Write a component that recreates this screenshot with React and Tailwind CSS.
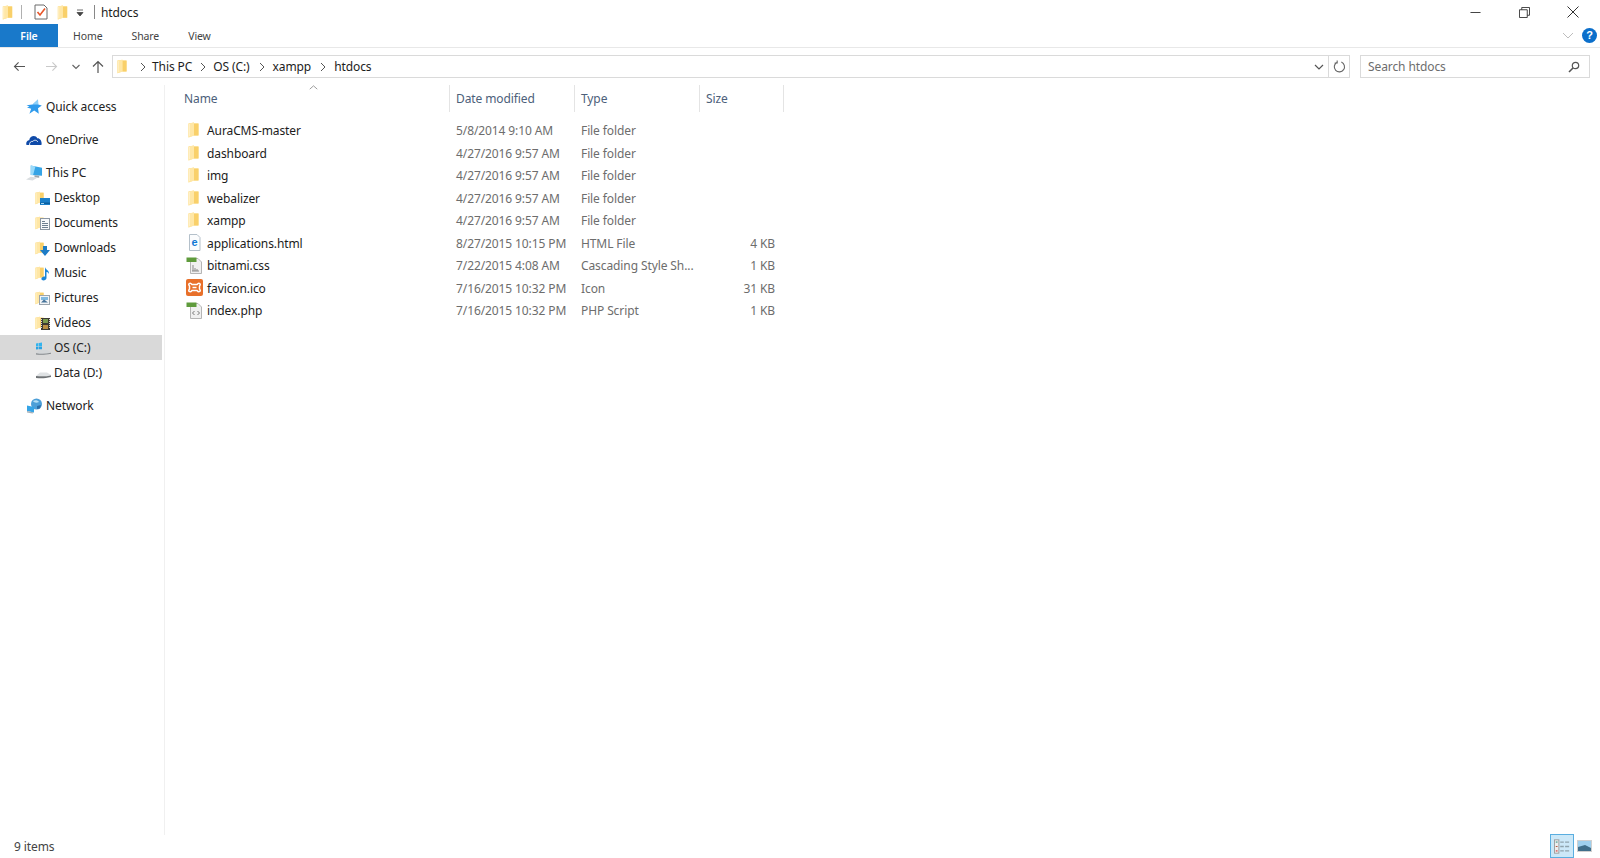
import React from "react";

const Folder = ({ className = "w-[11px] h-[16px]" }) => (
  <svg viewBox="0 0 11 16" className={className}>
    <path d="M0.5 1.5 L6 0.5 V1.5 H10.5 V13.5 L6 13.5 L0.5 15.5 Z" fill="#fddf8e" />
    <path d="M6 1.5 H10.5 V13.5 H6 Z" fill="#f9d06a" />
    <path d="M0.5 1.5 L6 0.5 V13.5 L0.5 15.5 Z" fill="#ffe7a6" />
    <path d="M1.5 2 V14" stroke="#fff3cf" strokeWidth="0.8" />
  </svg>
);

const Star = () => (
  <svg viewBox="0 0 16 16" className="w-4 h-4">
    <path d="M12 0.5 L12.2 5.4 L15.8 6.4 L12 9.2 L12.8 14.8 L8.2 11.6 L3.4 14.8 L5.2 9.8 L1 8.6 L3.4 7.4 L0.5 6.2 L6.6 5.6 Z" fill="#2f9bec" />
    <path d="M12 0.5 L12.2 5.4 L6.6 5.6 Z" fill="#8fd0f8" />
  </svg>
);

const Cloud = () => (
  <svg viewBox="0 0 16 16" className="w-4 h-4">
    <path d="M0.5 13 C-0.5 10 1.5 8 3.2 8.2 C4 3.6 9.6 2.6 11.4 6.4 C13.8 6 16.4 9.6 15.4 13 Z" fill="#0f4aa8" />
    <path d="M3.6 13 C3.2 10.6 5 9 6.8 9.4 C8 7.6 11 8 11.8 10" fill="none" stroke="#ffffff" strokeWidth="0.9" />
  </svg>
);

const Computer = () => (
  <svg viewBox="0 0 18 17" className="w-[17px] h-[16px]">
    <path d="M5 0.5 L17 3 V11.5 L5 10.5 Z" fill="#35a4e6" />
    <path d="M5 0.5 L10 1.5 L7.5 10.7 L5 10.5 Z" fill="#9adafa" />
    <path d="M9 11 L14 11.5 V13.5 L9 13 Z" fill="#9aa5ad" />
    <path d="M0 15.5 L5 12.5 L12 13.5 L7 16.5 Z" fill="#d9dde0" />
  </svg>
);

const Desktop = () => (
  <div className="relative w-[15px] h-4">
    <Folder className="w-[9px] h-4" />
    <svg viewBox="0 0 10 8" className="absolute right-0 bottom-[1px] w-[10px] h-2">
      <rect width="10" height="7" y="1" fill="#1b7fc9" />
      <rect width="10" height="1.5" y="5.5" fill="#0c5f9e" />
      <rect width="3" height="1" x="1" y="6" fill="#9fd5f4" />
    </svg>
  </div>
);

const Documents = () => (
  <div className="relative w-[15px] h-4">
    <Folder className="w-[9px] h-4" />
    <svg viewBox="0 0 10 12" className="absolute right-0 bottom-[1px] w-[10px] h-3">
      <rect x="0.5" y="0.5" width="9" height="11" fill="#f7f9fb" stroke="#8b96a2" />
      <path d="M2 3.5 H5 M2 5.5 H8 M2 7.5 H8 M2 9.5 H8" stroke="#6e7f90" />
    </svg>
  </div>
);

const Downloads = () => (
  <div className="relative w-[15px] h-4">
    <Folder className="w-[9px] h-4" />
    <svg viewBox="0 0 10 10" className="absolute right-0 bottom-0 w-[10px] h-[10px]">
      <path d="M3 0 H7 V4 H10 L5 10 L0 4 H3 Z" fill="#1d7cc6" />
    </svg>
  </div>
);

const Music = () => (
  <div className="relative w-[15px] h-4">
    <Folder className="w-[9px] h-4" />
    <svg viewBox="0 0 10 14" className="absolute right-0 bottom-0 w-[10px] h-[14px]">
      <path d="M5 0 C5.5 3 9.5 3 9 7 C8 5 7 5 6.5 5 V11 C6.5 13 3.6 14 2 13 C0.5 12 2 9.4 5 9.6 Z" fill="#1b86d6" />
    </svg>
  </div>
);

const Pictures = () => (
  <div className="relative w-[15px] h-4">
    <Folder className="w-[9px] h-4" />
    <svg viewBox="0 0 11 10" className="absolute right-0 bottom-[1px] w-[11px] h-[10px]">
      <rect x="0.5" y="0.5" width="10" height="9" fill="#f2f4f6" stroke="#9aa4ac" />
      <rect x="2" y="2" width="7" height="3" fill="#7fb9e0" />
      <path d="M2 7.5 L5 4.5 L9 7.5 Z" fill="#47749a" />
    </svg>
  </div>
);

const Videos = () => (
  <div className="relative w-[15px] h-4">
    <Folder className="w-[9px] h-4" />
    <svg viewBox="0 0 9 12" className="absolute right-0 bottom-[1px] w-[9px] h-3">
      <rect width="9" height="12" fill="#3d3a33" />
      <rect x="2" y="1" width="5" height="4" fill="#7b9b4e" />
      <rect x="2" y="7" width="5" height="4" fill="#b98f44" />
      <path d="M0.5 1 V11 M8.5 1 V11" stroke="#ddd" strokeDasharray="1 1" />
    </svg>
  </div>
);

const DriveC = () => (
  <svg viewBox="0 0 17 16" className="w-[17px] h-4">
    <path d="M1 3.5 L3.5 3.1 V6 L1 6.4 Z M4 3 L7 2.6 V6 L4 6 Z" fill="#33b4ee" />
    <path d="M1 6.9 L3.5 6.5 V9.3 L1 9.6 Z M4 6.5 L7 6.5 V9.3 L4 9.3 Z" fill="#2aa3e3" />
    <path d="M1 13 L4 10 H12 L16 12.5 V13.5 C10 15 6 15 1 14.5 Z" fill="#d3d6d8" />
    <path d="M1 13.2 C6 14 11 14 16 12.8 V13.8 C10 15 6 15 1 14.6 Z" fill="#85898c" />
  </svg>
);

const DriveD = () => (
  <svg viewBox="0 0 17 16" className="w-[17px] h-4">
    <path d="M1 11 L5 7.5 H12 L16 10 V11 Z" fill="#dfe2e4" />
    <path d="M1 11 C6 11.5 11 11.5 16 10.5 V12 C10 13.5 6 13.5 1 13 Z" fill="#6f7376" />
  </svg>
);

const Network = () => (
  <svg viewBox="0 0 17 16" className="w-[17px] h-4">
    <circle cx="10.5" cy="6" r="5.5" fill="#4c9fd8" />
    <path d="M7 3 C9 1.5 12 2 13 4 C11 5 8 5 7 3 Z" fill="#b5e0f5" />
    <path d="M11 8 L15 7 L14 10.5 L11 11 Z" fill="#2a6da8" />
    <path d="M1 7.5 L8 9 V14.5 L1 13 Z" fill="#35a4e6" />
    <path d="M1 13 L8 14.5 L6.5 15.5 L1 14.5 Z" fill="#a7b0b7" />
  </svg>
);

const Notepad = () => (
  <svg viewBox="0 0 14 16" className="w-[14px] h-4">
    <path d="M1 1 H10 L13 4 V15 H1 Z" fill="#fff" stroke="#6b6b6b" />
    <path d="M3.5 8 L6 11 L11 4.5" fill="none" stroke="#e8562a" strokeWidth="1.6" />
  </svg>
);

const PageIcon = ({ children }) => (
  <svg viewBox="0 0 17 17" className="w-[17px] h-[17px]">{children}</svg>
);

const FileIcons = {
  folder: () => <Folder />,
  html: () => (
    <PageIcon>
      <path d="M3.5 0.5 H11 L14 3.5 V16.5 H3.5 Z" fill="#fbfcfd" stroke="#b4c0ca" />
      <text x="8.6" y="12" textAnchor="middle" fontSize="11" fontWeight="700" fill="#0f78d4" fontFamily="Liberation Sans, sans-serif">e</text>
    </PageIcon>
  ),
  css: () => (
    <PageIcon>
      <path d="M4.5 1.5 H12 L15.5 5 V16.5 H4.5 Z" fill="#f0f0f0" stroke="#b5b5b5" />
      <rect x="0.5" y="0.5" width="10" height="4.5" fill="#5f9b3c" />
      <path d="M7 8 V14 M9 11 V14 M11 12 V14 M6 14 H13" stroke="#8a8a8a" />
    </PageIcon>
  ),
  ico: () => (
    <PageIcon>
      <rect width="17" height="17" rx="2" fill="#e8702a" />
      <path d="M6 5.5 H11 C13 3 15.5 5 13.5 7 V10 C15.5 12 13 14 11 11.5 H6 C4 14 1.5 12 3.5 10 V7 C1.5 5 4 3 6 5.5 Z" fill="none" stroke="#fff" strokeWidth="1.5" />
      <path d="M6.5 8.5 H10.5" stroke="#fff" strokeWidth="1.5" />
    </PageIcon>
  ),
  php: () => (
    <PageIcon>
      <path d="M4.5 1.5 H12 L15.5 5 V16.5 H4.5 Z" fill="#f0f0f0" stroke="#b5b5b5" />
      <rect x="0.5" y="0.5" width="10" height="4.5" fill="#5f9b3c" />
      <path d="M8.5 9 L6.5 11 L8.5 13 M11.5 9 L13.5 11 L11.5 13" fill="none" stroke="#777" />
    </PageIcon>
  ),
};

const Chevron = () => (
  <svg viewBox="0 0 6 10" className="w-[6px] h-[10px]">
    <path d="M1 1 L5 5 L1 9" fill="none" stroke="#555" strokeWidth="1" />
  </svg>
);

const pcItems = [
  [Desktop, "Desktop"],
  [Documents, "Documents"],
  [Downloads, "Downloads"],
  [Music, "Music"],
  [Pictures, "Pictures"],
  [Videos, "Videos"],
  [DriveC, "OS (C:)", true],
  [DriveD, "Data (D:)"],
];

const files = [
  ["folder", "AuraCMS-master", "5/8/2014 9:10 AM", "File folder", ""],
  ["folder", "dashboard", "4/27/2016 9:57 AM", "File folder", ""],
  ["folder", "img", "4/27/2016 9:57 AM", "File folder", ""],
  ["folder", "webalizer", "4/27/2016 9:57 AM", "File folder", ""],
  ["folder", "xampp", "4/27/2016 9:57 AM", "File folder", ""],
  ["html", "applications.html", "8/27/2015 10:15 PM", "HTML File", "4 KB"],
  ["css", "bitnami.css", "7/22/2015 4:08 AM", "Cascading Style Sh...", "1 KB"],
  ["ico", "favicon.ico", "7/16/2015 10:32 PM", "Icon", "31 KB"],
  ["php", "index.php", "7/16/2015 10:32 PM", "PHP Script", "1 KB"],
];

const NavRow = ({ Icon, label, className = "" }) => (
  <div className={`flex items-center h-[25px] pl-[26px] text-[#222] ${className}`}>
    <span className="w-[20px] flex justify-start"><Icon /></span>
    <span>{label}</span>
  </div>
);

export default function App() {
  return (
    <div className="relative flex flex-col h-[858px] w-[1600px] overflow-hidden bg-white text-[12px] tracking-[-0.1px] font-['Noto_Sans',sans-serif] text-[#222]">
      {/* title bar */}
      <div className="flex items-center h-6 shrink-0">
        <span className="ml-[2px] flex"><Folder className="w-[11px] h-[15px]" /></span>
        <span className="ml-[8px] w-px h-[14px] bg-[#b0b0b0]" />
        <span className="ml-[12px] flex"><Notepad /></span>
        <span className="ml-[9px] flex"><Folder className="w-[11px] h-[15px]" /></span>
        <svg viewBox="0 0 8 8" className="ml-[8px] w-2 h-2 mt-[2px]">
          <path d="M1 1 H7 M1 3.5 H7 L4 7 Z" stroke="#444" fill="#444" strokeWidth="0.8" />
        </svg>
        <span className="ml-[10px] w-px h-[14px] bg-[#888]" />
        <span className="ml-[6px] pt-[2px] text-[#1c1c1c]">htdocs</span>
        <div className="ml-auto flex items-center">
          <svg viewBox="0 0 12 12" className="w-[11px] h-[11px] mr-[38px]"><path d="M0.5 6 H11.5" stroke="#333" /></svg>
          <svg viewBox="0 0 12 12" className="w-[11px] h-[11px] mr-[37px]"><path d="M0.5 3 H9 V11.5 H0.5 Z M3 3 V0.5 H11.5 V9 H9" fill="none" stroke="#333" /></svg>
          <svg viewBox="0 0 12 12" className="w-[12px] h-[12px] mr-[21px]"><path d="M0.5 0.5 L11.5 11.5 M11.5 0.5 L0.5 11.5" stroke="#333" /></svg>
        </div>
      </div>
      {/* ribbon tabs */}
      <div className="flex items-center h-[24px] shrink-0 border-b border-[#e8e8e8] text-[10.5px] text-[#444]">
        <div className="w-[58px] h-[23px] pt-[2px] bg-[#1979ca] text-white flex items-center justify-center font-semibold">File</div>
        <span className="ml-[15px] pt-[2px]">Home</span>
        <span className="ml-[29px] pt-[2px]">Share</span>
        <span className="ml-[29px] pt-[2px]">View</span>
        <svg viewBox="0 0 12 8" className="ml-auto mr-[8px] w-[12px] h-2">
          <path d="M1 1 L6 6 L11 1" fill="none" stroke="#bdbdbd" />
        </svg>
        <span className="mr-[3px] w-[15px] h-[15px] rounded-full bg-[#0b6fcb] text-white text-[11px] font-bold flex items-center justify-center font-['Liberation_Sans',sans-serif]">?</span>
      </div>
      {/* nav bar */}
      <div className="flex items-center h-[37px] shrink-0">
        <svg viewBox="0 0 14 12" className="ml-[13px] w-[13px] h-[11px]"><path d="M13 6 H1.5 M6 1.5 L1.5 6 L6 10.5" fill="none" stroke="#555" strokeWidth="1.2" /></svg>
        <svg viewBox="0 0 14 12" className="ml-[19px] w-[13px] h-[11px]"><path d="M1 6 H12.5 M8 1.5 L12.5 6 L8 10.5" fill="none" stroke="#c9c9c9" strokeWidth="1.2" /></svg>
        <svg viewBox="0 0 8 6" className="ml-[14px] w-2 h-[6px]"><path d="M0.5 1 L4 4.5 L7.5 1" fill="none" stroke="#666" strokeWidth="1.2" /></svg>
        <svg viewBox="0 0 12 13" className="ml-[12px] w-[12px] h-[13px]"><path d="M6 13 V1.5 M1 6.5 L6 1.5 L11 6.5" fill="none" stroke="#555" strokeWidth="1.2" /></svg>
        <div className="ml-[8px] w-[1238px] h-[23px] border border-[#dadada] flex items-center">
          <span className="ml-[4px] flex"><Folder className="w-[10px] h-[15px]" /></span>
          <span className="ml-[13px] flex"><Chevron /></span>
          <span className="ml-[6px] text-[#1c1c1c]">This PC</span>
          <span className="ml-[8px] flex"><Chevron /></span>
          <span className="ml-[7px] text-[#1c1c1c]">OS (C:)</span>
          <span className="ml-[9px] flex"><Chevron /></span>
          <span className="ml-[8px] text-[#1c1c1c]">xampp</span>
          <span className="ml-[9px] flex"><Chevron /></span>
          <span className="ml-[8px] text-[#1c1c1c]">htdocs</span>
          <div className="ml-auto flex items-center h-full">
            <svg viewBox="0 0 10 6" className="w-[10px] h-[6px] mr-[4px]"><path d="M1 1 L5 5 L9 1" fill="none" stroke="#555" strokeWidth="1.2" /></svg>
            <div className="h-full w-[21px] border-l border-[#dadada] flex items-center justify-center">
              <svg viewBox="0 0 14 14" className="w-[13px] h-[13px]"><path d="M9 2.2 A5.5 5.5 0 1 1 4 2.6 M4.5 0.5 V3.2 H1.8" fill="none" stroke="#666" strokeWidth="1.2" /></svg>
            </div>
          </div>
        </div>
        <div className="ml-[10px] w-[230px] h-[23px] border border-[#dadada] flex items-center text-[#6d6d6d]">
          <span className="ml-[7px]">Search htdocs</span>
          <svg viewBox="0 0 12 12" className="ml-auto mr-[9px] w-[12px] h-[12px]"><circle cx="7.5" cy="4.5" r="3.2" fill="none" stroke="#555" strokeWidth="1.2" /><path d="M5 7 L1 11" stroke="#555" strokeWidth="1.6" /></svg>
        </div>
      </div>
      {/* main */}
      <div className="flex flex-1 min-h-0">
        <div className="w-[165px] shrink-0 border-r border-[#f0f0f0] pt-[9px] mb-[23px]">
          <NavRow Icon={Star} label="Quick access" />
          <NavRow Icon={Cloud} label="OneDrive" className="mt-2" />
          <NavRow Icon={Computer} label="This PC" className="mt-2" />
          {pcItems.map(([Icon, label, sel]) => (
            <div key={label} className={`flex items-center h-[25px] pl-[35px] mr-[2px] ${sel ? "bg-[#d9d9d9]" : ""}`}>
              <span className="w-[19px] flex"><Icon /></span>
              <span>{label}</span>
            </div>
          ))}
          <NavRow Icon={Network} label="Network" className="mt-2" />
        </div>
        <div className="flex-1 relative">
          <svg viewBox="0 0 10 6" className="absolute left-[144px] top-0 w-[9px] h-[5px]"><path d="M0.5 5 L5 1 L9.5 5" fill="none" stroke="#8a8a8a" /></svg>
          <div className="flex h-[27px] text-[#4c607a] w-[619px]">
            <div className="w-[284px] pl-[19px] flex items-center">Name</div>
            <div className="w-[125px] pl-[6px] flex items-center border-l border-[#e4e4e4]">Date modified</div>
            <div className="w-[125px] pl-[6px] flex items-center border-l border-[#e4e4e4]">Type</div>
            <div className="w-[85px] pl-[6px] flex items-center border-x border-[#e4e4e4]">Size</div>
          </div>
          <div className="pt-[8px]">
            {files.map(([icon, name, date, type, size]) => {
              const Ico = FileIcons[icon];
              return (
                <div key={name} className="flex items-center h-[22.5px] text-[#6d6d6d] whitespace-nowrap">
                  <div className="w-[284px] flex items-center">
                    <span className={`flex justify-center -mt-[2px] ${icon === "folder" ? "ml-[23px] w-[11px]" : "ml-[21px] w-[17px]"}`}><Ico /></span>
                    <span className={icon === "folder" ? "text-[#1c1c1c] ml-[8px]" : "text-[#1c1c1c] ml-[4px]"}>{name}</span>
                  </div>
                  <div className="w-[125px] pl-[7px]">{date}</div>
                  <div className="w-[125px] pl-[7px]">{type}</div>
                  <div className="w-[76px] text-right">{size}</div>
                </div>
              );
            })}
          </div>
        </div>
      </div>
      {/* status bar */}
      <div className="absolute left-[14px] bottom-[2px] text-[#444]">9 items</div>
      <div className="absolute right-[8px] bottom-0 flex items-center gap-[3px]">
        <div className="w-[24px] h-[24px] bg-[#cce8f8] border border-[#5aaee0] flex items-center justify-center">
          <svg viewBox="0 0 18 16" className="w-[16px] h-[15px]">
            <rect x="0.5" y="0.5" width="5" height="15" fill="#eee" stroke="#999" />
            <path d="M2 3 H4" stroke="#0a7a6a" /><path d="M2 8 H4" stroke="#b0442a" /><path d="M2 13 H4" stroke="#c00" />
            <path d="M7 3 H11 M12.5 3 H17 M7 8 H11 M12.5 8 H17 M7 13 H11 M12.5 13 H17" stroke="#8fa3ad" strokeWidth="1.5" />
          </svg>
        </div>
        <svg viewBox="0 0 15 12" className="w-[15px] h-[12px]">
          <rect width="15" height="12" fill="#d0d0d0" />
          <rect x="1" y="1" width="13" height="10" fill="#9fd0ee" />
          <path d="M1 7 L8 5 L14 8 V11 H1 Z" fill="#3f6e8a" />
        </svg>
      </div>
    </div>
  );
}
